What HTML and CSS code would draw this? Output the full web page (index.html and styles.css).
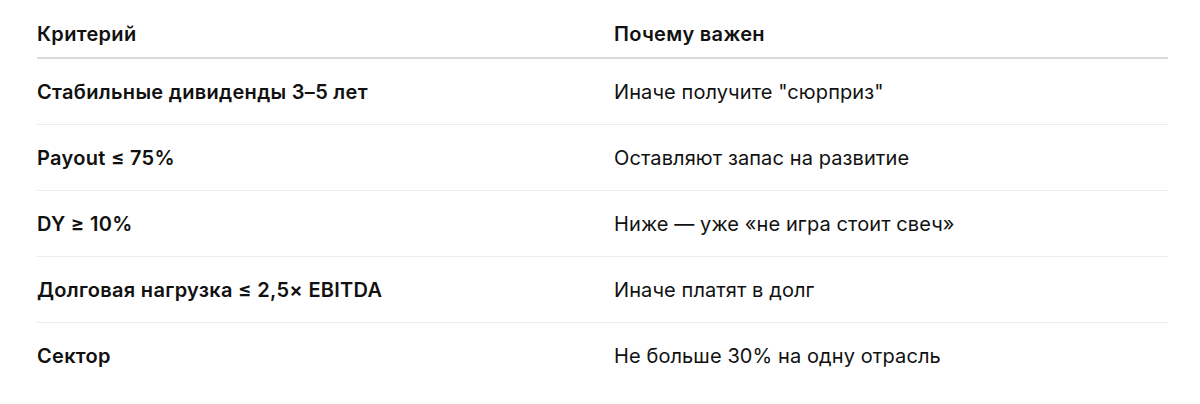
FILE: index.html
```html
<!DOCTYPE html>
<html lang="ru">
<head>
<meta charset="utf-8">
<link rel="stylesheet" href="styles.css">
</head>
<body>
<div class="wrap">
<table class="crit">
<thead>
<tr><th>Критерий</th><th>Почему важен</th></tr>
</thead>
<tbody>
<tr><td class="k">Стабильные дивиденды 3–5 лет</td><td>Иначе получите "сюрприз"</td></tr>
<tr><td class="k">Payout ≤ 75%</td><td>Оставляют запас на развитие</td></tr>
<tr><td class="k">DY ≥ 10%</td><td>Ниже — уже «не игра стоит свеч»</td></tr>
<tr><td class="k">Долговая нагрузка ≤ 2,5× EBITDA</td><td>Иначе платят в долг</td></tr>
<tr><td class="k">Сектор</td><td>Не больше 30% на одну отрасль</td></tr>
</tbody>
</table>
</div>
</body>
</html>
```

FILE: styles.css
```css
html, body {
  margin: 0;
  padding: 0;
  background: #ffffff;
}
body {
  font-family: Inter, "Noto Sans", sans-serif;
  color: #111111;
  font-size: 20px;
}
.wrap {
  padding: 0 32px 0 37px;
}
.crit {
  width: 100%;
  border-collapse: collapse;
}
.crit th {
  text-align: left;
  font-weight: 600;
  letter-spacing: 0.3px;
  line-height: 28px;
  padding: 20px 0 9px 0;
  border-bottom: 2px solid #d9d9d9;
}
.crit th:first-child {
  width: 577px;
}
.crit td {
  line-height: 28px;
  padding: 19px 0 18px 0;
  border-bottom: 1px solid #ececec;
  font-weight: 400;
  letter-spacing: 0.1px;
}
.crit tbody tr:last-child td {
  border-bottom: none;
}
.crit td.k {
  font-weight: 600;
  letter-spacing: 0.3px;
}
```
